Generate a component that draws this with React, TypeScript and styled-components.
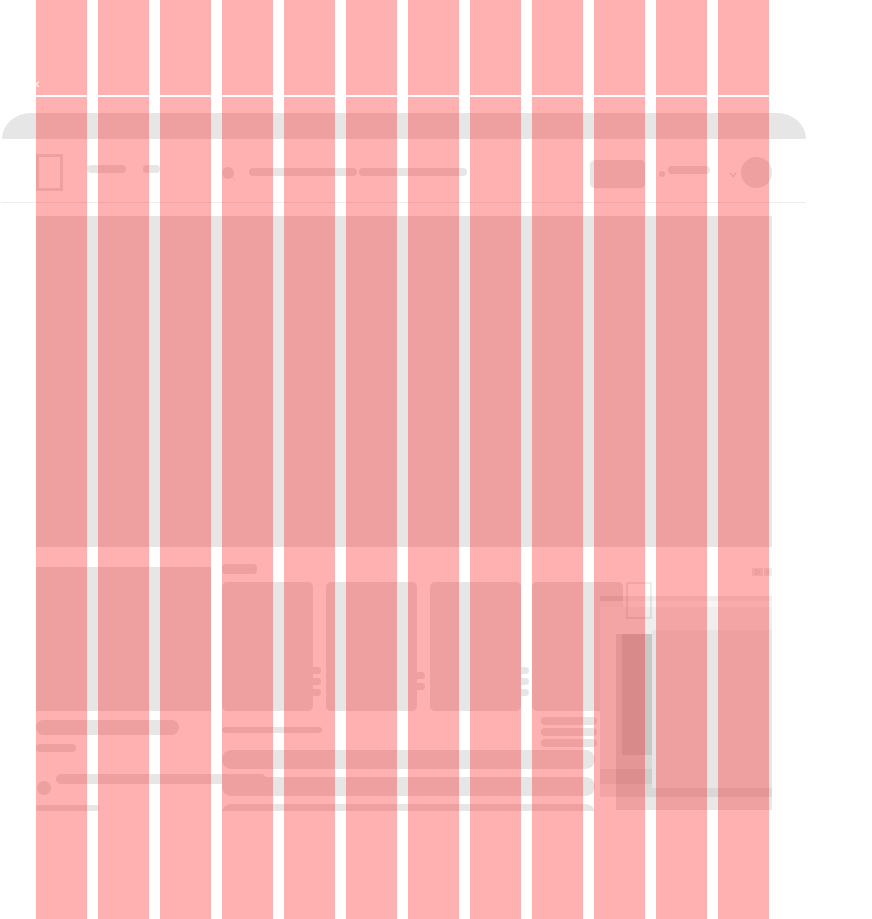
import * as React from "react";
import styled, { createGlobalStyle } from "styled-components";

const bone = "#e6e6e6";

const GlobalStyle = createGlobalStyle`
  html, body {
    margin: 0;
    padding: 0;
    background: #fff;
    overflow: hidden;
  }
  body {
    font-family: "Liberation Sans", Arial, sans-serif;
  }
`;

const Page = styled.div`
  position: relative;
  width: 872px;
  height: 919px;
  overflow: hidden;
`;

// the red column guide that sits over the whole page
const ColumnGuide = styled.div`
  position: absolute;
  top: 0;
  bottom: 0;
  left: 36px;
  display: grid;
  grid-template-columns: repeat(12, 51px);
  column-gap: 11px;
  z-index: 10;
  pointer-events: none;
`;

const Column = styled.div`
  background: rgba(255, 0, 0, 0.31);
`;

const TopBar = styled.div`
  position: relative;
  z-index: 20;
  box-sizing: border-box;
  height: 97px;
  margin-left: 36px;
  width: 733px;
  border-bottom: 2px solid #fff;
  color: #fff;
  font-size: 10px;
  line-height: 12px;
  padding-top: 79px;
`;

const CloseMark = styled.span`
  display: block;
  margin-left: -4px;
`;

const Shell = styled.div`
  margin: 16px 0 0 1px;
  width: 805px;
`;

const TopStrip = styled.div`
  height: 26px;
  margin-left: 1px;
  background: ${bone};
  border-radius: 29px 29px 0 0 / 26px 26px 0 0;
`;

const Header = styled.header`
  box-sizing: border-box;
  display: flex;
  align-items: flex-start;
  height: 64px;
  padding-left: 35px;
  border-bottom: 1px solid #eeeeee;
`;

const Logo = styled.div`
  box-sizing: border-box;
  flex: none;
  width: 27px;
  height: 37px;
  margin-top: 15px;
  border: 3px solid ${bone};
`;

const HeaderPill = styled.div<{ $w: number; $top: number; $gap: number }>`
  flex: none;
  width: ${(p) => p.$w}px;
  height: 8px;
  margin: ${(p) => p.$top}px 0 0 ${(p) => p.$gap}px;
  border-radius: 4px;
  background: ${bone};
`;

const SearchIcon = styled.svg`
  flex: none;
  width: 14px;
  height: 14px;
  margin: 28px 0 0 62px;
`;

const ActionButton = styled.div`
  flex: none;
  width: 55px;
  height: 27px;
  margin: 21px 0 0 123px;
  border-radius: 5px;
  background: ${bone};
  box-shadow: 0 1px 1px rgba(0, 0, 0, 0.12);
`;

const Dot = styled.div`
  flex: none;
  width: 6px;
  height: 6px;
  margin: 32px 0 0 14px;
  border-radius: 50%;
  background: ${bone};
`;

const Chevron = styled.svg`
  flex: none;
  width: 8px;
  height: 5px;
  margin: 33px 0 0 19px;
`;

const Avatar = styled.div`
  flex: none;
  width: 31px;
  height: 31px;
  margin: 18px 0 0 4px;
  border-radius: 50%;
  background: ${bone};
`;

const Main = styled.main`
  margin: 13px 0 0 35px;
  width: 736px;
`;

const Hero = styled.div`
  height: 331px;
  background: ${bone};
`;

const Lower = styled.section`
  position: relative;
  display: grid;
  grid-template-columns: 175px 1fr;
  column-gap: 11px;
  height: 247px;
  margin-top: 17px;
  overflow: hidden;
`;

const LeftColumn = styled.div`
  padding-top: 3px;
`;

const Poster = styled.div`
  height: 144px;
  background: ${bone};
`;

const Title = styled.div`
  width: 143px;
  height: 15px;
  margin-top: 9px;
  border-radius: 8px;
  background: ${bone};
`;

const Subtitle = styled.div`
  width: 40px;
  height: 8px;
  margin-top: 9px;
  border-radius: 4px;
  background: ${bone};
`;

const Author = styled.div`
  position: relative;
  z-index: 1;
  display: flex;
  align-items: flex-start;
  height: 21px;
  margin-top: 22px;
`;

const AuthorAvatar = styled.div`
  flex: none;
  width: 14px;
  height: 14px;
  margin: 7px 5px 0 1px;
  border-radius: 50%;
  background: ${bone};
`;

const AuthorName = styled.div`
  flex: none;
  width: 210px;
  height: 10px;
  border-radius: 5px;
  background: ${bone};
`;

const Meta = styled.div`
  width: 63px;
  height: 6px;
  margin-top: 10px;
  border-radius: 3px;
  background: ${bone};
`;

const CenterColumn = styled.div`
  min-width: 0;
`;

const SectionHead = styled.div`
  display: flex;
  justify-content: space-between;
  align-items: flex-start;
  height: 18px;
`;

const SectionLabel = styled.div`
  width: 35px;
  height: 10px;
  border-radius: 4px;
  background: ${bone};
`;

const AdBadges = styled.div`
  display: flex;
  gap: 1px;
  margin-top: 4px;
`;

const AdBadge = styled.svg<{ $w: number }>`
  display: block;
  width: ${(p) => p.$w}px;
  height: 8px;
  background: #ededed;
  border-radius: 1px;
`;

const Shelf = styled.div`
  display: flex;
  align-items: flex-start;
  height: 129px;
`;

const ShelfItem = styled.div<{ $gap: number }>`
  position: relative;
  flex: none;
  display: flex;
  align-items: flex-start;
  margin-right: ${(p) => p.$gap}px;
`;

const Tile = styled.div`
  flex: none;
  width: 91px;
  height: 129px;
  border-radius: 5px;
  background: ${bone};
`;

const SideStack = styled.div<{ $top: number }>`
  flex: none;
  display: flex;
  flex-direction: column;
  gap: 4px;
  width: 8px;
  padding-top: ${(p) => p.$top}px;
`;

const SidePill = styled.div`
  height: 7px;
  border-radius: 0 4px 4px 0;
  background: ${bone};
`;

const UnderList = styled.div`
  position: absolute;
  top: 135px;
  left: 9px;
  display: flex;
  flex-direction: column;
  gap: 3px;
  width: 56px;
`;

const UnderPill = styled.div`
  height: 8px;
  border-radius: 4px;
  background: ${bone};
`;

const Caption = styled.div`
  width: 100px;
  height: 6px;
  margin-top: 16px;
  border-radius: 3px;
  background: ${bone};
`;

const Rows = styled.div`
  display: flex;
  flex-direction: column;
  gap: 8px;
  margin-top: 17px;
`;

const Row = styled.div`
  flex: none;
  width: 373px;
  height: 19px;
  border-radius: 9px;
  background: ${bone};
`;

// the floating banner that covers the right end of the shelf
const Banner = styled.aside`
  position: absolute;
  top: 32px;
  left: 564px;
  width: 172px;
  height: 201px;
  display: flex;
  flex-direction: column;
  z-index: 2;
`;

const BannerStripe = styled.div`
  flex: none;
  height: 5px;
  background: rgba(0, 0, 0, 0.065);
`;

const BannerSheen = styled.div`
  flex: none;
  height: 6px;
  background: rgba(238, 238, 238, 0.5);
`;

const BannerBody = styled.div`
  flex: 1;
  background: #eeeeee;
`;

const BannerLogo = styled.div`
  position: absolute;
  top: -14px;
  left: 26px;
  box-sizing: border-box;
  width: 26px;
  height: 37px;
  border: 2px solid rgba(0, 0, 0, 0.07);
`;

const BannerShade = styled.div`
  position: absolute;
  top: 38px;
  left: 16px;
  right: 0;
  height: 176px;
  background: rgba(0, 0, 0, 0.09);
`;

const BannerMedia = styled.div`
  position: absolute;
  top: 34px;
  left: 52px;
  right: 0;
  height: 158px;
  background: ${bone};
`;

const BannerThumb = styled.div`
  position: absolute;
  top: 38px;
  left: 22px;
  width: 30px;
  height: 121px;
  background: rgba(0, 0, 0, 0.08);
`;

const BannerCaption = styled.div`
  position: absolute;
  top: 173px;
  left: 0;
  width: 52px;
  height: 15px;
  background: rgba(0, 0, 0, 0.05);
`;

const columns = Array.from({ length: 12 }, (_, i) => i);

export default function App() {
  return (
    <Page>
      <GlobalStyle />
      <TopBar>
        <CloseMark>✕</CloseMark>
      </TopBar>
      <Shell>
        <TopStrip />
        <Header>
          <Logo />
          <HeaderPill $w={39} $top={26} $gap={24} />
          <HeaderPill $w={17} $top={26} $gap={17} />
          <SearchIcon viewBox="0 0 14 14">
            <circle cx="6" cy="6" r="6" fill={bone} />
            <path d="M10.5 10.5 L13 13" stroke={bone} strokeWidth="1" />
          </SearchIcon>
          <HeaderPill $w={108} $top={29} $gap={13} />
          <HeaderPill $w={108} $top={29} $gap={2} />
          <ActionButton />
          <Dot />
          <HeaderPill $w={42} $top={27} $gap={3} />
          <Chevron viewBox="0 0 8 5">
            <path d="M0.5 0.5 L4 4.5 L7.5 0.5" fill="none" stroke="#dadada" strokeWidth="1.1" />
          </Chevron>
          <Avatar />
        </Header>
        <Main>
          <Hero />
          <Lower>
            <LeftColumn>
              <Poster />
              <Title />
              <Subtitle />
              <Author>
                <AuthorAvatar />
                <AuthorName />
              </Author>
              <Meta />
            </LeftColumn>
            <CenterColumn>
              <SectionHead>
                <SectionLabel />
                <AdBadges>
                  <AdBadge $w={11} viewBox="0 0 11 8">
                    <path d="M3.5 1.5 L8 4 L3.5 6.5 Z" fill="none" stroke="#dcdcdc" strokeWidth="1" />
                  </AdBadge>
                  <AdBadge $w={8} viewBox="0 0 8 8">
                    <path d="M2 2 L6 6 M6 2 L2 6" fill="none" stroke="#dcdcdc" strokeWidth="1" />
                  </AdBadge>
                </AdBadges>
              </SectionHead>
              <Shelf>
                <ShelfItem $gap={5}>
                  <Tile />
                  <SideStack $top={85}>
                    <SidePill />
                    <SidePill />
                    <SidePill />
                  </SideStack>
                </ShelfItem>
                <ShelfItem $gap={5}>
                  <Tile />
                  <SideStack $top={90}>
                    <SidePill />
                    <SidePill />
                  </SideStack>
                </ShelfItem>
                <ShelfItem $gap={3}>
                  <Tile />
                  <SideStack $top={85}>
                    <SidePill />
                    <SidePill />
                    <SidePill />
                  </SideStack>
                </ShelfItem>
                <ShelfItem $gap={0}>
                  <Tile />
                  <UnderList>
                    <UnderPill />
                    <UnderPill />
                    <UnderPill />
                  </UnderList>
                </ShelfItem>
              </Shelf>
              <Caption />
              <Rows>
                <Row />
                <Row />
                <Row />
              </Rows>
            </CenterColumn>
            <Banner>
              <BannerStripe />
              <BannerSheen />
              <BannerBody />
              <BannerLogo />
              <BannerShade />
              <BannerMedia />
              <BannerThumb />
              <BannerCaption />
            </Banner>
          </Lower>
        </Main>
      </Shell>
      <ColumnGuide>
        {columns.map((c) => (
          <Column key={c} />
        ))}
      </ColumnGuide>
    </Page>
  );
}
